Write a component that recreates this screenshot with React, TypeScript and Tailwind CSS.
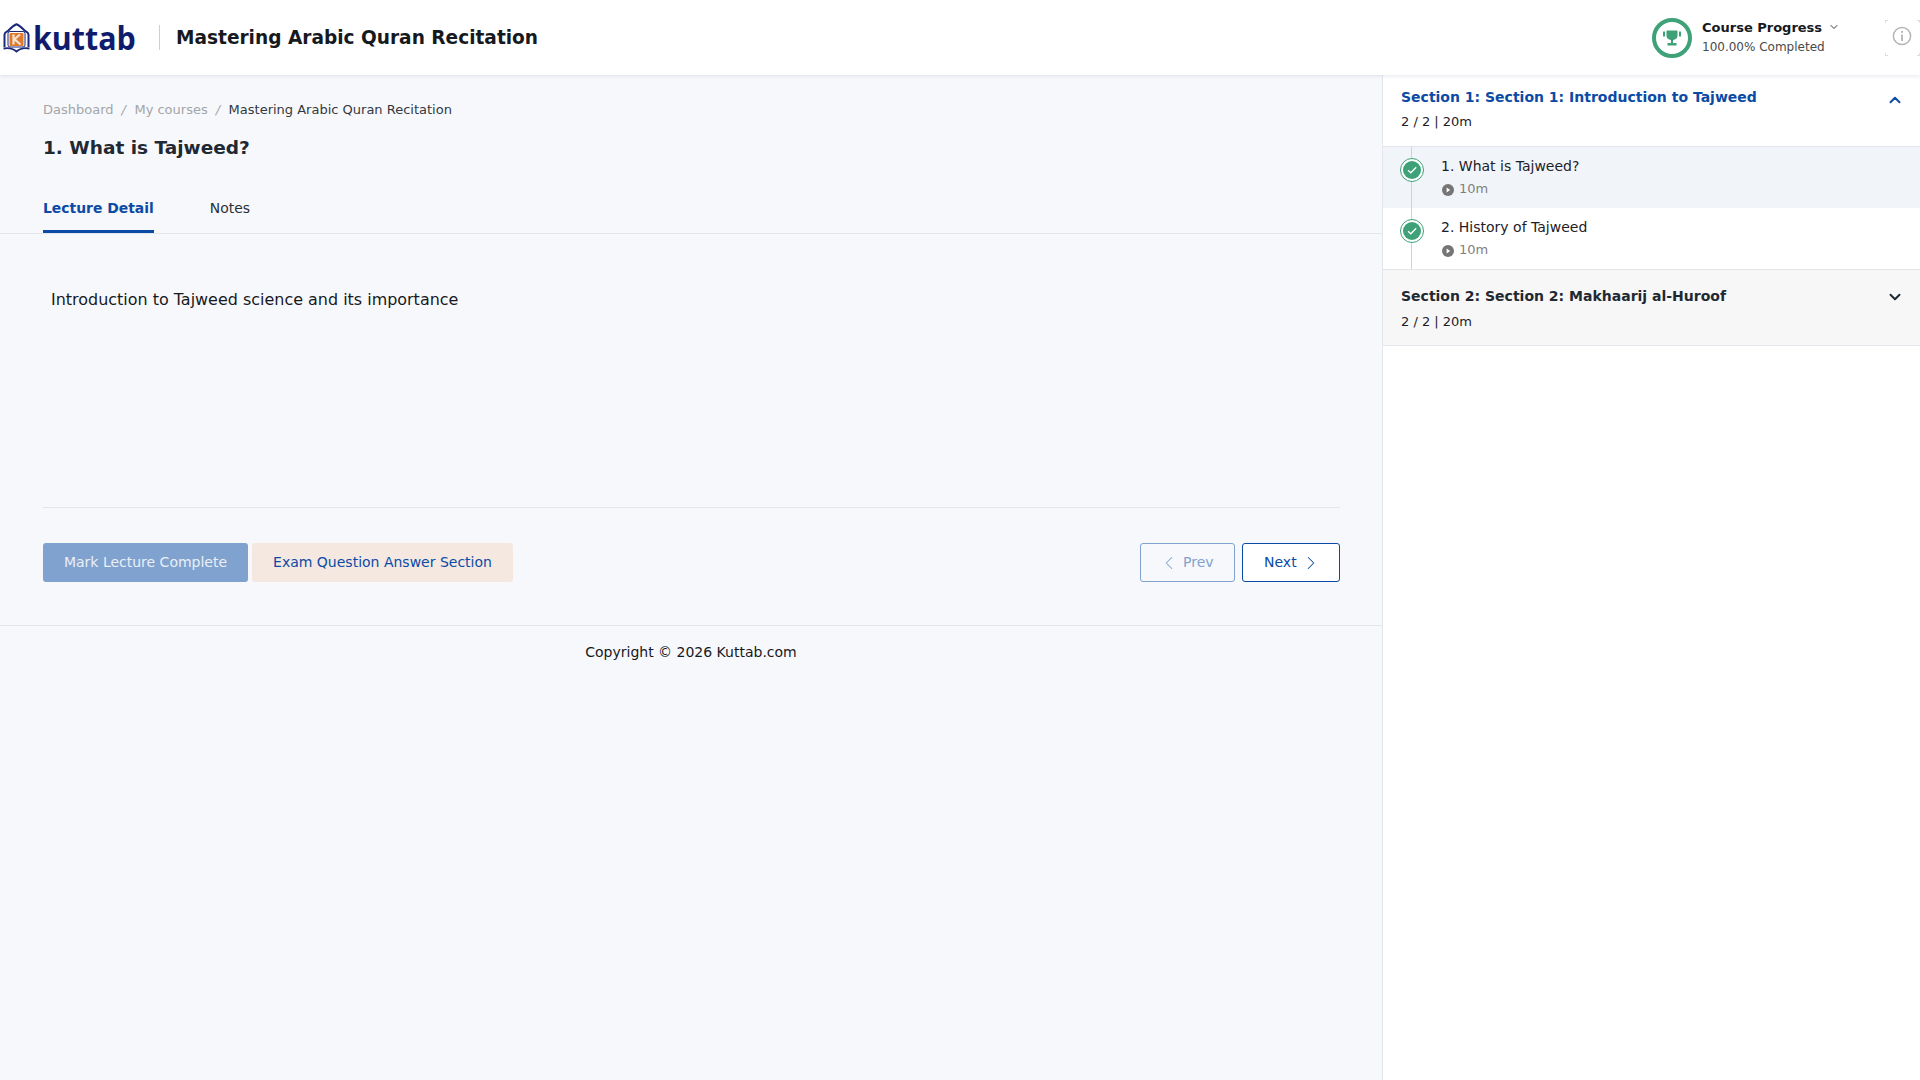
import React from "react";
import { ChevronDown, ChevronUp, ChevronLeft, ChevronRight } from "lucide-react";

const Logo = () => (
  <div className="flex items-center pl-[3px] w-[146px] h-[40px]">
    <svg width="27" height="30" viewBox="0 0 27 30" className="shrink-0">
      <path d="M1.5 24 V11.5 C1.5 9 4 9 5.5 7.5 C7.5 5.5 10 2.5 13.5 1.2 C17 2.5 19.5 5.5 21.5 7.5 C23 9 25.5 9 25.5 11.5 V24" fill="none" stroke="#1b2a78" strokeWidth="2" />
      <rect x="5" y="8.5" width="17" height="15.5" rx="2" fill="#fff" stroke="#1b2a78" strokeWidth="1" />
      <rect x="6.5" y="10" width="14" height="13" rx="1" fill="#e07a2c" />
      <path d="M10.5 11.5 V21.5 M17 11.5 L11.5 16.2 L17.5 21.5" fill="none" stroke="#f7e3d0" strokeWidth="2.2" />
      <path d="M0.5 25.5 C5 24.5 10 25.5 13.5 28.5 C17 25.5 22 24.5 26.5 25.5" fill="none" stroke="#1b2a78" strokeWidth="1.8" />
    </svg>
    <span className="inline-block origin-left scale-x-[0.92] text-[33px] font-bold leading-none text-[#0f1c6e] font-['Open_Sans','Liberation_Sans',sans-serif] ml-[3px]">kuttab</span>
  </div>
);

const Trophy = () => (
  <svg width="20" height="18" viewBox="0 0 20 18">
    <path d="M4.5 1.5 H15.5 V6.5 C15.5 9.5 13 11 10 11 C7 11 4.5 9.5 4.5 6.5 Z" fill="#3ea177" />
    <rect x="1" y="2.5" width="2" height="5" fill="#3ea177" />
    <rect x="17" y="2.5" width="2" height="5" fill="#3ea177" />
    <rect x="9" y="11" width="2" height="3" fill="#3ea177" />
    <rect x="5.5" y="14" width="9" height="2.5" fill="#3ea177" />
  </svg>
);

const Check = () => (
  <div className="relative z-10 w-[24px] h-[24px] rounded-full border border-[#3ea177] bg-white flex items-center justify-center shrink-0">
    <div className="w-[18px] h-[18px] rounded-full bg-[#3ea177] flex items-center justify-center">
      <svg width="12" height="12" viewBox="0 0 12 12">
        <path d="M2 6.2 L4.8 8.8 L10.2 3.2" fill="none" stroke="#fff" strokeWidth="1.3" />
      </svg>
    </div>
  </div>
);

const PlayDot = () => (
  <svg width="12" height="12" viewBox="0 0 12 12" className="shrink-0 mt-[2px]">
    <circle cx="6" cy="6" r="6" fill="#757575" />
    <path d="M4.6 3.6 L8.2 6 L4.6 8.4 Z" fill="#fff" />
  </svg>
);

const Lesson = ({ title, active }: { title: string; active?: boolean }) => (
  <div className={`relative flex h-[61px] pl-[58px] ${active ? "bg-[#f1f5fa]" : "bg-white"}`}>
    <div className="absolute left-[28px] top-0 bottom-0 w-px bg-[#cfd3d8]" />
    <div className="absolute left-[17px] top-[11px]"><Check /></div>
    <div className="pt-[9px]">
      <div className="text-[14px] leading-[20px] text-[#1d2127]">{title}</div>
      <div className="flex items-center gap-[5px] mt-[3px] pl-px text-[13px] leading-[20px] text-[#808080]">
        <PlayDot />
        <span>10m</span>
      </div>
    </div>
  </div>
);

export default function App() {
  return (
    <div className="min-h-[1080px] h-[1080px] flex flex-col bg-[#f7f8fc] overflow-hidden font-['DejaVu_Sans',sans-serif]">
      <header className="relative z-20 h-[75px] shrink-0 bg-white shadow-[0_1px_4px_rgba(30,50,90,0.12)] flex items-center">
        <Logo />
        <div className="ml-[13px] w-px h-[25px] bg-[#cfcfcf]" />
        <h1 className="ml-[16px] text-[18.56px] font-bold text-[#16191d] leading-[28px]">Mastering Arabic Quran Recitation</h1>
        <div className="ml-auto flex items-center">
          <div className="w-[40px] h-[40px] rounded-full border-[4px] border-[#3ea177] flex items-center justify-center">
            <Trophy />
          </div>
          <div className="ml-[10px] w-[183px]">
            <div className="flex items-center gap-[6px] text-[13px] font-bold leading-[19px] text-[#16191d] -mt-[1px]">
              Course Progress
              <ChevronDown size={12} strokeWidth={1.8} className="text-[#222]" />
            </div>
            <div className="text-[12px] leading-[19px] text-[#4a4a4a] mt-[1px]">100.00% Completed</div>
          </div>
          <div className="relative w-[35px] h-[36px] flex items-center justify-center">
            <span className="absolute left-0 top-0 w-[3px] h-[3px] border-l border-t border-[#d5dcec]" />
            <span className="absolute left-0 bottom-0 w-[3px] h-[3px] border-l border-b border-[#d5dcec]" />
            <span className="absolute right-0 top-0 w-[3px] h-[3px] border-r border-t border-[#d5dcec]" />
            <span className="absolute right-0 bottom-0 w-[3px] h-[3px] border-r border-b border-[#d5dcec]" />
            <svg width="20" height="20" viewBox="0 0 20 20" className="-mt-[4px] -ml-[1px]">
              <circle cx="10" cy="10" r="8.6" fill="none" stroke="#b5b5b5" strokeWidth="1.5" />
              <rect x="9.1" y="8.5" width="1.8" height="6.5" fill="#b5b5b5" />
              <rect x="9.1" y="5" width="1.8" height="1.9" fill="#b5b5b5" />
            </svg>
          </div>
        </div>
      </header>

      <div className="flex flex-1 min-h-0">
        <main className="w-[1383px] shrink-0 border-r border-[#e4e6eb]">
          <div className="pl-[43px] pt-[26px]">
            <nav className="flex items-center text-[13px] leading-[18px]">
              <span className="text-[#a3a5a8]">Dashboard</span>
              <span className="text-[#a3a5a8] ml-[8px] mr-[8.5px] italic">/</span>
              <span className="text-[#a3a5a8]">My courses</span>
              <span className="text-[#a3a5a8] ml-[8px] mr-[8.5px] italic">/</span>
              <span className="text-[#33383f]">Mastering Arabic Quran Recitation</span>
            </nav>
            <h2 className="mt-[14px] text-[18.5px] leading-[30px] font-bold text-[#1f2933]">1. What is Tajweed?</h2>
          </div>
          <div className="mt-[34px] h-[37px] border-b border-[#e3e5ea] pl-[43px] flex gap-[56px] text-[13.92px]">
            <div className="h-[36px] border-b-[3px] border-[#0b4ba5] font-bold text-[#0b4ba5] leading-[22px]">Lecture Detail</div>
            <div className="text-[#2a2f36] leading-[22px]">Notes</div>
          </div>
          <div className="pl-[43px] pr-[42px]">
            <p className="mt-[54px] pl-[8px] text-[15.96px] leading-[24px] text-[#16191d]">Introduction to Tajweed science and its importance</p>
            <div className="mt-[195px] border-t border-[#e3e5ea]" />
            <div className="mt-[35px] flex items-center text-[14px]">
              <button className="h-[39px] w-[205px] rounded-[3px] bg-[#80a2ce] text-[#e9eff7]">Mark Lecture Complete</button>
              <button className="ml-[4px] h-[39px] w-[261px] rounded-[3px] bg-[#f4e8e1] text-[#0b4ba5]">Exam Question Answer Section</button>
              <button className="ml-auto h-[39px] w-[95px] rounded-[3px] border border-[#80a2ce] text-[#80a2ce] flex items-center justify-start pl-[17px] gap-[3px]">
                <ChevronLeft size={22} strokeWidth={1.1} />
                Prev
              </button>
              <button className="ml-[7px] h-[39px] w-[98px] rounded-[3px] border border-[#0b4ba5] bg-white text-[#0b4ba5] flex items-center justify-start pl-[21px] gap-[3px]">
                Next
                <ChevronRight size={22} strokeWidth={1.1} />
              </button>
            </div>
          </div>
          <footer className="mt-[43px] border-t border-[#e3e5ea] pt-[16px] text-center text-[14px] leading-[21px] text-[#16191d]">
            Copyright © 2026 Kuttab.com
          </footer>
        </main>

        <aside className="flex-1 bg-white">
          <div className="h-[72px] border-b border-[#e3e5ea] pl-[18px] pr-[18px] pt-[12px] relative">
            <div className="text-[14px] font-bold leading-[20px] text-[#0b4ba5]">Section 1: Section 1: Introduction to Tajweed</div>
            <div className="mt-[5px] text-[13px] leading-[20px] text-[#1d2127]">2 / 2 | 20m</div>
            <ChevronUp size={18} strokeWidth={2.6} className="absolute right-[16px] top-[16px] text-[#0b4ba5]" />
          </div>
          <Lesson title="1. What is Tajweed?" active />
          <Lesson title="2. History of Tajweed" />
          <div className="h-[77px] bg-[#f7f7f7] border-y border-[#e3e5ea] pl-[18px] pr-[18px] pt-[16px] relative">
            <div className="text-[14px] font-bold leading-[20px] text-[#1f2933]">Section 2: Section 2: Makhaarij al-Huroof</div>
            <div className="mt-[6px] text-[13px] leading-[20px] text-[#1d2127]">2 / 2 | 20m</div>
            <ChevronDown size={18} strokeWidth={2.6} className="absolute right-[16px] top-[18px] text-[#1f2933]" />
          </div>
        </aside>
      </div>
    </div>
  );
}
